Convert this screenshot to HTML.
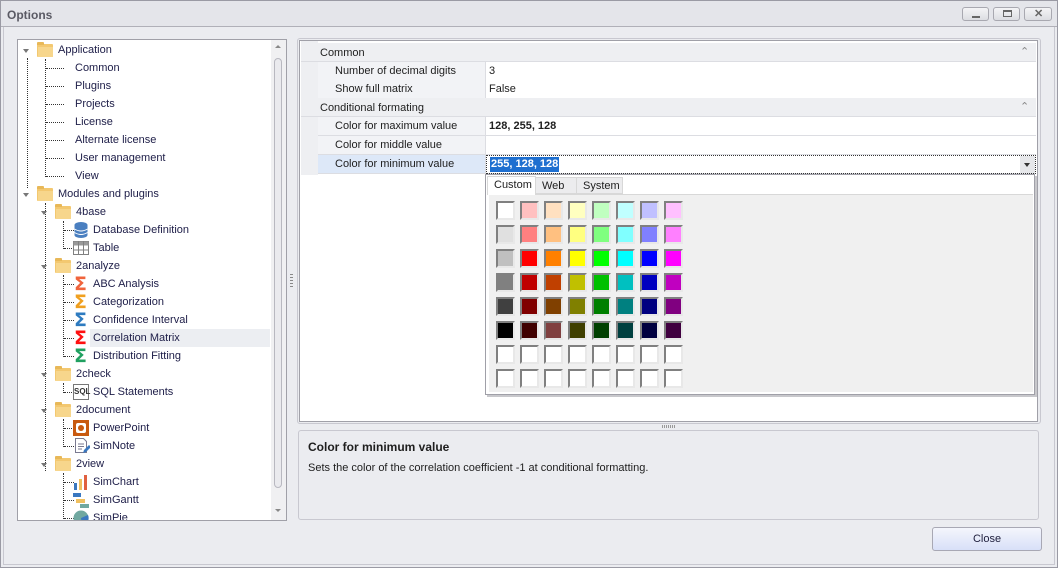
<!DOCTYPE html>
<html><head><meta charset="utf-8"><style>
*{box-sizing:border-box;margin:0;padding:0}
body{width:1058px;height:568px;overflow:hidden;background:#ebecf0;font-family:"Liberation Sans",sans-serif;font-size:11px;color:#1e1e1e;position:relative}
.a{position:absolute}
.t{position:absolute;white-space:nowrap;line-height:18px;color:#20204a;margin-top:1px}
.fold{position:absolute;width:16px;height:13px;background:#f3c870;border-radius:1px;margin-top:1px}
.fold:before{content:"";position:absolute;left:0;top:-2px;width:7px;height:3px;background:#e8b858;border-radius:1px 1px 0 0}
.fold:after{content:"";position:absolute;left:1px;top:3px;width:15px;height:10px;background:#f7d68c}
.arr{position:absolute;width:0;height:0;border-left:3px solid transparent;border-right:3px solid transparent;border-top:4px solid #777;margin-top:1px}
.vd{position:absolute;width:0;border-left:1px dotted #333}
.hd{position:absolute;height:0;border-top:1px dotted #333}
.sig{position:absolute;font-weight:bold;font-size:19px;line-height:16px;font-family:"DejaVu Sans",sans-serif;margin-top:1px}
.pr{position:absolute;left:318px;width:718px;height:19px;border-bottom:1px solid #dcdde2;background:#fff}
.pr .l{position:absolute;left:0;width:168px;height:18px;background:#f2f3f6;border-right:1px solid #dcdde2;padding-left:17px;line-height:19px}
.pr .v{position:absolute;left:171px;line-height:19px}
.cat{position:absolute;left:301px;width:735px;height:19px;background:#eeeff2;padding-left:19px;line-height:20px;border-bottom:1px solid #dcdde2}
.sw{position:absolute;width:19px;height:19px;border:2px solid;border-color:#808080 #e8e8e8 #e8e8e8 #808080}
.btn{position:absolute;top:7px;width:27px;height:14px;border:1px solid #a8a8b0;border-radius:3px;background:linear-gradient(#f4f4f6,#dcdde2)}
</style></head><body>
<div class="a" style="left:0;top:0;width:1058px;height:568px;border:1px solid #9a9aa4"></div>
<div class="a" style="left:1px;top:1px;width:1056px;height:26px;background:#e4e5ea;border-bottom:1px solid #b0b0b8"></div>
<div class="t" style="left:7px;top:5px;font-weight:bold;color:#5a5a64;font-size:12px">Options</div>
<div class="btn" style="left:962px"><div class="a" style="left:9px;top:8px;width:8px;height:2px;background:#666"></div></div>
<div class="btn" style="left:993px"><div class="a" style="left:9px;top:2px;width:9px;height:7px;border:1px solid #666;border-top-width:2px"></div></div>
<div class="btn" style="left:1024px;width:28px"><div class="a" style="left:9px;top:-1px;font-size:11px;font-weight:bold;color:#666">✕</div></div>
<div class="a" style="left:3px;top:27px;width:1052px;height:538px;border:1px solid #c8c8d0;border-top:none"></div>

<div class="a" style="left:17px;top:39px;width:270px;height:482px;background:#fff;border:1px solid #a0a0a8;overflow:hidden">
 <div class="a" style="left:253px;top:0;width:16px;height:480px;background:#f0f0f2"></div>
 <div class="a" style="left:256px;top:18px;width:8px;height:430px;border:1px solid #b8b8c0;border-radius:4px;background:#eaeaee"></div>
 <div class="a" style="left:257px;top:5px;border-left:3px solid transparent;border-right:3px solid transparent;border-bottom:3px solid #888"></div>
 <div class="a" style="left:257px;top:469px;border-left:3px solid transparent;border-right:3px solid transparent;border-top:3px solid #888"></div>
 <div class="a" style="left:72px;top:289px;width:180px;height:18px;background:#eceef2"></div>
</div>
<div class="a" style="left:18px;top:41px;width:252px;height:479px;overflow:hidden">
 <div class="vd" style="left:9px;top:17px;height:130px"></div>
 <div class="vd" style="left:27px;top:18px;height:118px"></div>
 <div class="hd" style="left:28px;top:27px;width:18px"></div><div class="hd" style="left:28px;top:45px;width:18px"></div><div class="hd" style="left:28px;top:63px;width:18px"></div><div class="hd" style="left:28px;top:81px;width:18px"></div><div class="hd" style="left:28px;top:99px;width:18px"></div><div class="hd" style="left:28px;top:117px;width:18px"></div><div class="hd" style="left:28px;top:135px;width:18px"></div>
 <div class="vd" style="left:27px;top:162px;height:268px"></div>
 <div class="vd" style="left:45px;top:180px;height:28px"></div>
 <div class="hd" style="left:46px;top:189px;width:10px"></div><div class="hd" style="left:46px;top:207px;width:10px"></div>
 <div class="vd" style="left:45px;top:234px;height:82px"></div>
 <div class="hd" style="left:46px;top:243px;width:10px"></div><div class="hd" style="left:46px;top:261px;width:10px"></div><div class="hd" style="left:46px;top:279px;width:10px"></div><div class="hd" style="left:46px;top:297px;width:10px"></div><div class="hd" style="left:46px;top:315px;width:10px"></div>
 <div class="vd" style="left:45px;top:342px;height:10px"></div><div class="hd" style="left:46px;top:351px;width:10px"></div>
 <div class="vd" style="left:45px;top:378px;height:28px"></div><div class="hd" style="left:46px;top:387px;width:10px"></div><div class="hd" style="left:46px;top:405px;width:10px"></div>
 <div class="vd" style="left:45px;top:432px;height:50px"></div><div class="hd" style="left:46px;top:441px;width:10px"></div><div class="hd" style="left:46px;top:459px;width:10px"></div><div class="hd" style="left:46px;top:477px;width:10px"></div>
</div>
<div class="arr" style="left:23px;top:48px"></div><div class="fold" style="left:37px;top:43px"></div><div class="t" style="left:58px;top:40px">Application</div>
<div class="t" style="left:75px;top:58px">Common</div>
<div class="t" style="left:75px;top:76px">Plugins</div>
<div class="t" style="left:75px;top:94px">Projects</div>
<div class="t" style="left:75px;top:112px">License</div>
<div class="t" style="left:75px;top:130px">Alternate license</div>
<div class="t" style="left:75px;top:148px">User management</div>
<div class="t" style="left:75px;top:166px">View</div>
<div class="arr" style="left:23px;top:192px"></div><div class="fold" style="left:37px;top:187px"></div><div class="t" style="left:58px;top:184px">Modules and plugins</div>
<div class="arr" style="left:41px;top:210px"></div><div class="fold" style="left:55px;top:205px"></div><div class="t" style="left:76px;top:202px">4base</div>
<svg class="a" style="left:74px;top:222px" width="14" height="16"><ellipse cx="7" cy="3" rx="6.5" ry="3" fill="#4a7fc0"/><rect x=".5" y="3" width="13" height="10" fill="#4a7fc0"/><ellipse cx="7" cy="13" rx="6.5" ry="3" fill="#4a7fc0"/><path d="M.5 7q6.5 4 13 0M.5 10.5q6.5 4 13 0" stroke="#fff" fill="none"/></svg>
<div class="t" style="left:93px;top:220px">Database Definition</div>
<svg class="a" style="left:73px;top:241px" width="16" height="14"><rect x=".5" y=".5" width="15" height="13" fill="#fff" stroke="#808080"/><rect x=".5" y=".5" width="15" height="4" fill="#999"/><path d="M5.5 0v14M10.5 0v14M0 9h16" stroke="#808080"/></svg>
<div class="t" style="left:93px;top:238px">Table</div>
<div class="arr" style="left:41px;top:264px"></div><div class="fold" style="left:55px;top:259px"></div><div class="t" style="left:76px;top:256px">2analyze</div>
<div class="sig" style="left:74px;top:275px;color:#f0643c">Σ</div><div class="t" style="left:93px;top:274px">ABC Analysis</div>
<div class="sig" style="left:74px;top:293px;color:#f0a020">Σ</div><div class="t" style="left:93px;top:292px">Categorization</div>
<div class="sig" style="left:74px;top:311px;color:#2e7bc0">Σ</div><div class="t" style="left:93px;top:310px">Confidence Interval</div>
<div class="sig" style="left:74px;top:329px;color:#ff1010">Σ</div><div class="t" style="left:93px;top:328px">Correlation Matrix</div>
<div class="sig" style="left:74px;top:347px;color:#20a060">Σ</div><div class="t" style="left:93px;top:346px">Distribution Fitting</div>
<div class="arr" style="left:41px;top:372px"></div><div class="fold" style="left:55px;top:367px"></div><div class="t" style="left:76px;top:364px">2check</div>
<div class="a" style="left:73px;top:384px;width:16px;height:16px;border:1px solid #777;font-size:8px;line-height:14px;text-align:center;font-weight:bold;color:#333">SQL</div><div class="t" style="left:93px;top:382px">SQL Statements</div>
<div class="arr" style="left:41px;top:408px"></div><div class="fold" style="left:55px;top:403px"></div><div class="t" style="left:76px;top:400px">2document</div>
<div class="a" style="left:73px;top:420px;width:16px;height:16px;background:#c85a10;border:2px solid #c85a10"><div class="a" style="left:1px;top:1px;width:10px;height:10px;background:#fff;border-radius:2px"></div><div class="a" style="left:3px;top:3px;width:6px;height:6px;background:#c85a10;border-radius:3px"></div></div><div class="t" style="left:93px;top:418px">PowerPoint</div>
<svg class="a" style="left:74px;top:438px" width="16" height="16"><path d="M1.5.5h8l3 3v11h-11z" fill="#fff" stroke="#7a7a90"/><path d="M4 6h6M4 8.5h6M4 11h4" stroke="#7a7a90"/><path d="M9 15l1-3 5-5 2 2-5 5z" fill="#3a78c0"/></svg><div class="t" style="left:93px;top:436px">SimNote</div>
<div class="arr" style="left:41px;top:462px"></div><div class="fold" style="left:55px;top:457px"></div><div class="t" style="left:76px;top:454px">2view</div>
<svg class="a" style="left:73px;top:474px" width="16" height="16"><rect x="1" y="9" width="3" height="7" fill="#3a78c0"/><rect x="6" y="5" width="3" height="11" fill="#f0c060"/><rect x="11" y="1" width="3" height="15" fill="#e06040"/></svg><div class="t" style="left:93px;top:472px">SimChart</div>
<svg class="a" style="left:73px;top:492px" width="16" height="16"><rect x="0" y="1" width="8" height="4" fill="#3a78c0"/><rect x="3" y="7" width="9" height="4" fill="#f0c060"/><rect x="7" y="12" width="9" height="4" fill="#70a8a0"/></svg><div class="t" style="left:93px;top:490px">SimGantt</div>
<div class="a" style="left:18px;top:508px;width:252px;height:12px;overflow:hidden"><svg class="a" style="left:55px;top:2px" width="16" height="16"><circle cx="8" cy="8" r="7.5" fill="#70a8a0"/><path d="M8 8L15 5A7.5 7.5 0 0 1 9 15.5z" fill="#3a78c0"/></svg><div class="t" style="left:75px;top:0px">SimPie</div></div>

<div class="a" style="left:290px;top:274px;width:3px;height:14px;background:repeating-linear-gradient(#888 0 1px,transparent 1px 3px)"></div>

<div class="a" style="left:297px;top:38px;width:744px;height:386px;border:1px solid #c8c8d0;border-radius:3px"></div>
<div class="a" style="left:299px;top:40px;width:739px;height:382px;background:#fff;border:1px solid #a0a0a8"></div>
<div class="a" style="left:301px;top:41px;width:17px;height:134px;background:#eeeff2"></div>
<div class="cat" style="top:43px">Common</div>
<div class="a" style="left:1020px;top:45px;color:#888;font-size:11px">⌃</div>
<div class="pr" style="top:62px"><div class="l">Number of decimal digits</div><div class="v">3</div></div>
<div class="pr" style="top:80px"><div class="l">Show full matrix</div><div class="v">False</div></div>
<div class="cat" style="top:98px;height:19px">Conditional formating</div>
<div class="a" style="left:1020px;top:100px;color:#888;font-size:11px">⌃</div>
<div class="pr" style="top:117px"><div class="l">Color for maximum value</div><div class="v" style="font-weight:bold">128, 255, 128</div></div>
<div class="pr" style="top:136px"><div class="l">Color for middle value</div><div class="v"></div></div>
<div class="pr" style="top:155px;height:19px"><div class="l" style="background:#dde8f8">Color for minimum value</div>
 <div class="a" style="left:168px;top:0;width:550px;height:19px;border:1px dotted #333"></div>
 <div class="v" style="left:172px;top:2px;line-height:15px;background:#1e6fd0;color:#fff;font-weight:bold;padding:0 1px">255, 128, 128</div>
 <div class="a" style="left:702px;top:1px;width:15px;height:17px;background:#e6e7ea"><div class="a" style="left:4px;top:7px;border-left:3px solid transparent;border-right:3px solid transparent;border-top:4px solid #333"></div></div>
</div>
<div class="a" style="left:487px;top:176px;width:550px;height:221px;background:#c8c8cc"></div>
<div class="a" style="left:485px;top:174px;width:550px;height:221px;background:#fff;border:1px solid #a0a0a8"></div>
<div class="a" style="left:489px;top:194px;width:544px;height:198px;background:#f0f0f0;border-top:1px solid #d8d8d8"></div>
<div class="a" style="left:487px;top:176px;width:49px;height:19px;background:#fff;border:1px solid #d8d8d8;border-bottom:none;padding-left:6px;line-height:16px;font-size:11px">Custom</div>
<div class="a" style="left:536px;top:177px;width:41px;height:17px;background:#ececee;border:1px solid #d8d8d8;border-left:none;padding-left:6px;line-height:17px">Web</div>
<div class="a" style="left:577px;top:177px;width:46px;height:17px;background:#ececee;border:1px solid #d8d8d8;border-left:none;padding-left:6px;line-height:17px">System</div>
<div class="a" style="left:496px;top:201px">
<div class="sw" style="left:0;top:0;background:#fff"></div><div class="sw" style="left:24px;top:0;background:#ffc0c0"></div><div class="sw" style="left:48px;top:0;background:#ffe0c0"></div><div class="sw" style="left:72px;top:0;background:#ffffc0"></div><div class="sw" style="left:96px;top:0;background:#c0ffc0"></div><div class="sw" style="left:120px;top:0;background:#c0ffff"></div><div class="sw" style="left:144px;top:0;background:#c0c0ff"></div><div class="sw" style="left:168px;top:0;background:#ffc0ff"></div>
<div class="sw" style="left:0;top:24px;background:#e0e0e0"></div><div class="sw" style="left:24px;top:24px;background:#ff8080"></div><div class="sw" style="left:48px;top:24px;background:#ffc080"></div><div class="sw" style="left:72px;top:24px;background:#ffff80"></div><div class="sw" style="left:96px;top:24px;background:#80ff80"></div><div class="sw" style="left:120px;top:24px;background:#80ffff"></div><div class="sw" style="left:144px;top:24px;background:#8080ff"></div><div class="sw" style="left:168px;top:24px;background:#ff80ff"></div>
<div class="sw" style="left:0;top:48px;background:#c0c0c0"></div><div class="sw" style="left:24px;top:48px;background:#ff0000"></div><div class="sw" style="left:48px;top:48px;background:#ff8000"></div><div class="sw" style="left:72px;top:48px;background:#ffff00"></div><div class="sw" style="left:96px;top:48px;background:#00ff00"></div><div class="sw" style="left:120px;top:48px;background:#00ffff"></div><div class="sw" style="left:144px;top:48px;background:#0000ff"></div><div class="sw" style="left:168px;top:48px;background:#ff00ff"></div>
<div class="sw" style="left:0;top:72px;background:#808080"></div><div class="sw" style="left:24px;top:72px;background:#c00000"></div><div class="sw" style="left:48px;top:72px;background:#c04000"></div><div class="sw" style="left:72px;top:72px;background:#c0c000"></div><div class="sw" style="left:96px;top:72px;background:#00c000"></div><div class="sw" style="left:120px;top:72px;background:#00c0c0"></div><div class="sw" style="left:144px;top:72px;background:#0000c0"></div><div class="sw" style="left:168px;top:72px;background:#c000c0"></div>
<div class="sw" style="left:0;top:96px;background:#404040"></div><div class="sw" style="left:24px;top:96px;background:#800000"></div><div class="sw" style="left:48px;top:96px;background:#804000"></div><div class="sw" style="left:72px;top:96px;background:#808000"></div><div class="sw" style="left:96px;top:96px;background:#008000"></div><div class="sw" style="left:120px;top:96px;background:#008080"></div><div class="sw" style="left:144px;top:96px;background:#000080"></div><div class="sw" style="left:168px;top:96px;background:#800080"></div>
<div class="sw" style="left:0;top:120px;background:#000"></div><div class="sw" style="left:24px;top:120px;background:#400000"></div><div class="sw" style="left:48px;top:120px;background:#804040"></div><div class="sw" style="left:72px;top:120px;background:#404000"></div><div class="sw" style="left:96px;top:120px;background:#004000"></div><div class="sw" style="left:120px;top:120px;background:#004040"></div><div class="sw" style="left:144px;top:120px;background:#000040"></div><div class="sw" style="left:168px;top:120px;background:#400040"></div>
<div class="sw" style="left:0;top:144px;background:#fff"></div><div class="sw" style="left:24px;top:144px;background:#fff"></div><div class="sw" style="left:48px;top:144px;background:#fff"></div><div class="sw" style="left:72px;top:144px;background:#fff"></div><div class="sw" style="left:96px;top:144px;background:#fff"></div><div class="sw" style="left:120px;top:144px;background:#fff"></div><div class="sw" style="left:144px;top:144px;background:#fff"></div><div class="sw" style="left:168px;top:144px;background:#fff"></div>
<div class="sw" style="left:0;top:168px;background:#fff"></div><div class="sw" style="left:24px;top:168px;background:#fff"></div><div class="sw" style="left:48px;top:168px;background:#fff"></div><div class="sw" style="left:72px;top:168px;background:#fff"></div><div class="sw" style="left:96px;top:168px;background:#fff"></div><div class="sw" style="left:120px;top:168px;background:#fff"></div><div class="sw" style="left:144px;top:168px;background:#fff"></div><div class="sw" style="left:168px;top:168px;background:#fff"></div>
</div>
<div class="a" style="left:662px;top:425px;width:14px;height:3px;background:repeating-linear-gradient(90deg,#999 0 1px,transparent 1px 2px)"></div>
<div class="a" style="left:298px;top:430px;width:741px;height:90px;border:1px solid #c8c8d0;border-radius:3px;background:#ebecf0"></div>
<div class="t" style="left:308px;top:437px;font-weight:bold;color:#1e1e1e;font-size:12px">Color for minimum value</div>
<div class="t" style="left:308px;top:458px;color:#1e1e1e">Sets the color of the correlation coefficient -1 at conditional formatting.</div>
<div class="a" style="left:932px;top:527px;width:110px;height:24px;border:1px solid #a8a8b4;border-radius:3px;background:linear-gradient(#f4f6fc,#d8e0f8);text-align:center;line-height:22px;color:#1e1e3c">Close</div>
</body></html>
